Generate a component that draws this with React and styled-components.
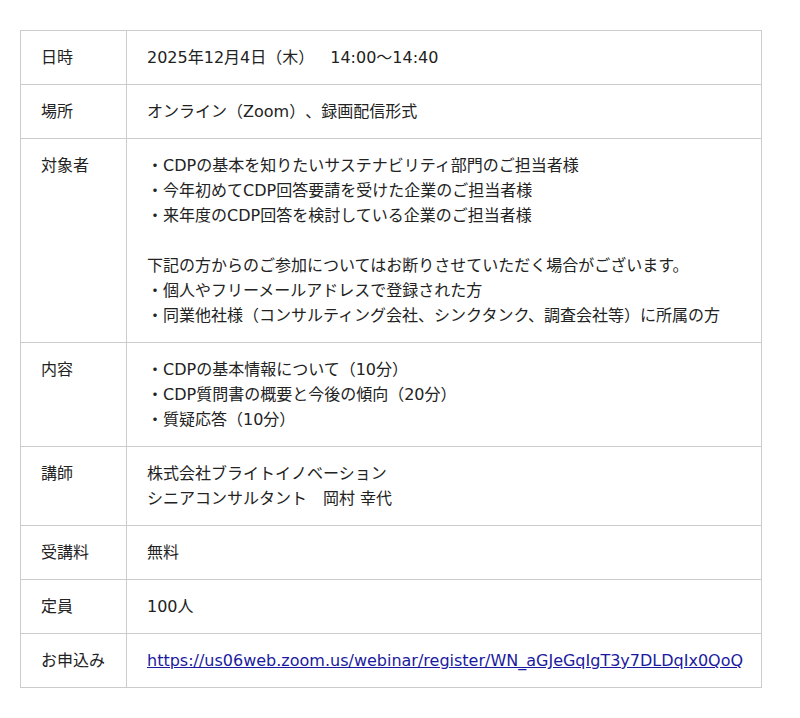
import React from "react"
import styled, { createGlobalStyle } from "styled-components"

const GlobalStyle = createGlobalStyle`
  body {
    margin: 0;
    background: #fff;
    font-family: "DejaVu Sans", "Noto Sans CJK JP", sans-serif;
    color: #222;
    text-spacing-trim: space-all;
  }
`

const Page = styled.div`
  padding: 30px 20px;
`

const Table = styled.table`
  width: 742px;
  border-collapse: collapse;
  table-layout: fixed;
  font-size: 16px;
  line-height: 25px;
`

const LabelCol = styled.col`
  width: 106px;
`

const Row = styled.tr`
  border-top: 1px solid #ccc;
  border-bottom: 1px solid #ccc;
`

const Label = styled.th`
  padding: 14px 20px;
  text-align: left;
  vertical-align: top;
  font-weight: normal;
  border-left: 1px solid #ccc;
  border-right: 1px solid #ccc;
  white-space: nowrap;
`

const Value = styled.td`
  padding: 14px 20px;
  vertical-align: top;
  border-right: 1px solid #ccc;
`

const Line = styled.div`
  min-height: 25px;
`

const Link = styled.a`
  color: #1a1aa0;
  text-decoration: underline;
`

const rows = [
  { label: "日時", lines: ["2025年12月4日（木）　14:00～14:40"] },
  { label: "場所", lines: ["オンライン（Zoom）、録画配信形式"] },
  {
    label: "対象者",
    lines: [
      "・CDPの基本を知りたいサステナビリティ部門のご担当者様",
      "・今年初めてCDP回答要請を受けた企業のご担当者様",
      "・来年度のCDP回答を検討している企業のご担当者様",
      "",
      "下記の方からのご参加についてはお断りさせていただく場合がございます。",
      "・個人やフリーメールアドレスで登録された方",
      "・同業他社様（コンサルティング会社、シンクタンク、調査会社等）に所属の方",
    ],
  },
  {
    label: "内容",
    lines: [
      "・CDPの基本情報について（10分）",
      "・CDP質問書の概要と今後の傾向（20分）",
      "・質疑応答（10分）",
    ],
  },
  { label: "講師", lines: ["株式会社ブライトイノベーション", "シニアコンサルタント　岡村 幸代"] },
  { label: "受講料", lines: ["無料"] },
  { label: "定員", lines: ["100人"] },
]

const url = "https://us06web.zoom.us/webinar/register/WN_aGJeGqIgT3y7DLDqIx0QoQ"

export default function App() {
  return (
    <Page>
      <GlobalStyle />
      <Table>
        <colgroup>
          <LabelCol />
          <col />
        </colgroup>
        <tbody>
          {rows.map((r) => (
            <Row key={r.label}>
              <Label>{r.label}</Label>
              <Value>
                {r.lines.map((l, i) => (
                  <Line key={i}>{l}</Line>
                ))}
              </Value>
            </Row>
          ))}
          <Row>
            <Label>お申込み</Label>
            <Value>
              <Link href={url}>{url}</Link>
            </Value>
          </Row>
        </tbody>
      </Table>
    </Page>
  )
}
